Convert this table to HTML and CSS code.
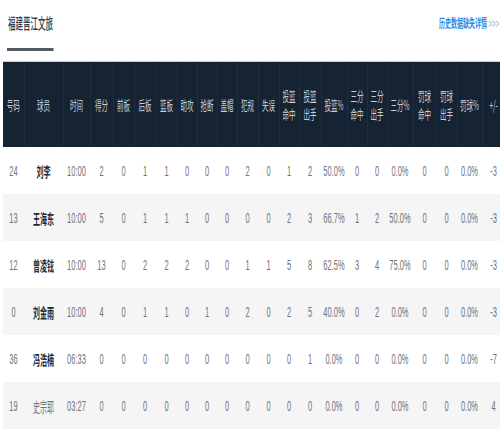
FILE: index.html
```html
<!DOCTYPE html>
<html lang="zh">
<head>
<meta charset="utf-8">
<link rel="stylesheet" href="styles.css">
</head>
<body>
<div class="viewport">
  <div class="page">
    <div class="top">
      <div class="title">福建晋江文旅</div>
      <a class="more">历史数据缺失详情 <span class="arrows">&gt;&gt;&gt;</span></a>
    </div>
    <table class="stats">
      <colgroup>
        <col style="width:42px"><col style="width:78px"><col style="width:54px"><col style="width:46px">
        <col style="width:42px"><col style="width:44px"><col style="width:42px"><col style="width:40px">
        <col style="width:40px"><col style="width:40px"><col style="width:42px"><col style="width:42px">
        <col style="width:40px"><col style="width:44px"><col style="width:52px"><col style="width:40px">
        <col style="width:40px"><col style="width:52px"><col style="width:46px"><col style="width:42px">
        <col style="width:50px"><col style="width:46px">
      </colgroup>
      <thead>
        <tr>
          <th>号码</th><th>球员</th><th>时间</th><th>得分</th><th>前板</th><th>后板</th><th>篮板</th><th>助攻</th><th>抢断</th><th>盖帽</th><th>犯规</th><th>失误</th>
          <th>投篮<br>命中</th><th>投篮<br>出手</th><th>投篮%</th><th>三分<br>命中</th><th>三分<br>出手</th><th>三分%</th><th>罚球<br>命中</th><th>罚球<br>出手</th><th>罚球%</th><th>+/-</th>
        </tr>
      </thead>
      <tbody>
        <tr><td>24</td><td class="name">刘李</td><td>10:00</td><td>2</td><td>0</td><td>1</td><td>1</td><td>0</td><td>0</td><td>0</td><td>2</td><td>0</td><td>1</td><td>2</td><td>50.0%</td><td>0</td><td>0</td><td>0.0%</td><td>0</td><td>0</td><td>0.0%</td><td>-3</td></tr>
        <tr><td>13</td><td class="name">王海东</td><td>10:00</td><td>5</td><td>0</td><td>1</td><td>1</td><td>1</td><td>0</td><td>0</td><td>0</td><td>0</td><td>2</td><td>3</td><td>66.7%</td><td>1</td><td>2</td><td>50.0%</td><td>0</td><td>0</td><td>0.0%</td><td>-3</td></tr>
        <tr><td>12</td><td class="name">曾凌铉</td><td>10:00</td><td>13</td><td>0</td><td>2</td><td>2</td><td>2</td><td>0</td><td>0</td><td>1</td><td>1</td><td>5</td><td>8</td><td>62.5%</td><td>3</td><td>4</td><td>75.0%</td><td>0</td><td>0</td><td>0.0%</td><td>-3</td></tr>
        <tr><td>0</td><td class="name">刘金雨</td><td>10:00</td><td>4</td><td>0</td><td>1</td><td>1</td><td>0</td><td>1</td><td>0</td><td>2</td><td>0</td><td>2</td><td>5</td><td>40.0%</td><td>0</td><td>2</td><td>0.0%</td><td>0</td><td>0</td><td>0.0%</td><td>-3</td></tr>
        <tr><td>36</td><td class="name">冯浩楠</td><td>06:33</td><td>0</td><td>0</td><td>0</td><td>0</td><td>0</td><td>0</td><td>0</td><td>0</td><td>0</td><td>0</td><td>1</td><td>0.0%</td><td>0</td><td>0</td><td>0.0%</td><td>0</td><td>0</td><td>0.0%</td><td>-7</td></tr>
        <tr><td>19</td><td class="name plain">史宗耶</td><td>03:27</td><td>0</td><td>0</td><td>0</td><td>0</td><td>0</td><td>0</td><td>0</td><td>0</td><td>0</td><td>0</td><td>0</td><td>0.0%</td><td>0</td><td>0</td><td>0.0%</td><td>0</td><td>0</td><td>0.0%</td><td>4</td></tr>
      </tbody>
    </table>
  </div>
</div>
</body>
</html>
```
FILE: styles.css
```css
html, body {
  margin: 0;
  padding: 0;
  background: #fff;
  overflow: hidden;
}
.viewport {
  width: 500px;
  height: 440px;
  overflow: hidden;
}
.page {
  width: 1000px;
  transform: scaleX(0.5);
  transform-origin: 0 0;
  font-family: "Liberation Sans", "Noto Sans CJK SC", sans-serif;
}
.top {
  display: flex;
  justify-content: space-between;
  align-items: flex-start;
  padding-left: 14px;
  height: 61px;
}
.title {
  font-family: "Noto Sans CJK SC", sans-serif;
  font-size: 15px;
  font-weight: 500;
  line-height: 20px;
  color: #34393f;
  padding: 13px 1px 15px 2px;
  border-bottom: 3px solid #56595e;
}
.more {
  font-family: "Noto Sans CJK SC", sans-serif;
  font-size: 12px;
  line-height: 16px;
  color: #3486df;
  font-weight: bold;
  padding-top: 15px;
  padding-right: 2px;
}
.arrows {
  font-weight: normal;
  color: #8fb2d8;
  font-family: "Liberation Sans", sans-serif;
}
.stats {
  border-collapse: collapse;
  table-layout: fixed;
  width: 1004px;
  margin-left: 6px;
  border-top: 1px solid #c9d2db;
}
.stats th {
  background: #152333;
  color: #c9ced4;
  font-family: "Noto Sans CJK SC", sans-serif;
  font-weight: normal;
  font-size: 13px;
  line-height: 18px;
  height: 85px;
  padding: 0;
  text-align: center;
  border-left: 1px solid #2b3a4b;
}
.stats th:first-child {
  border-left: none;
}
.stats td {
  height: 47px;
  padding: 0;
  text-align: center;
  font-size: 15px;
  color: #707378;
}
.stats tbody tr:nth-child(even) td {
  background: #f5f5f6;
}
.stats td.name {
  font-family: "Noto Sans CJK SC", sans-serif;
  font-size: 14px;
  font-weight: bold;
  color: #1d2b3b;
}
.stats td.name.plain {
  font-weight: normal;
  color: #6f7378;
}
```
